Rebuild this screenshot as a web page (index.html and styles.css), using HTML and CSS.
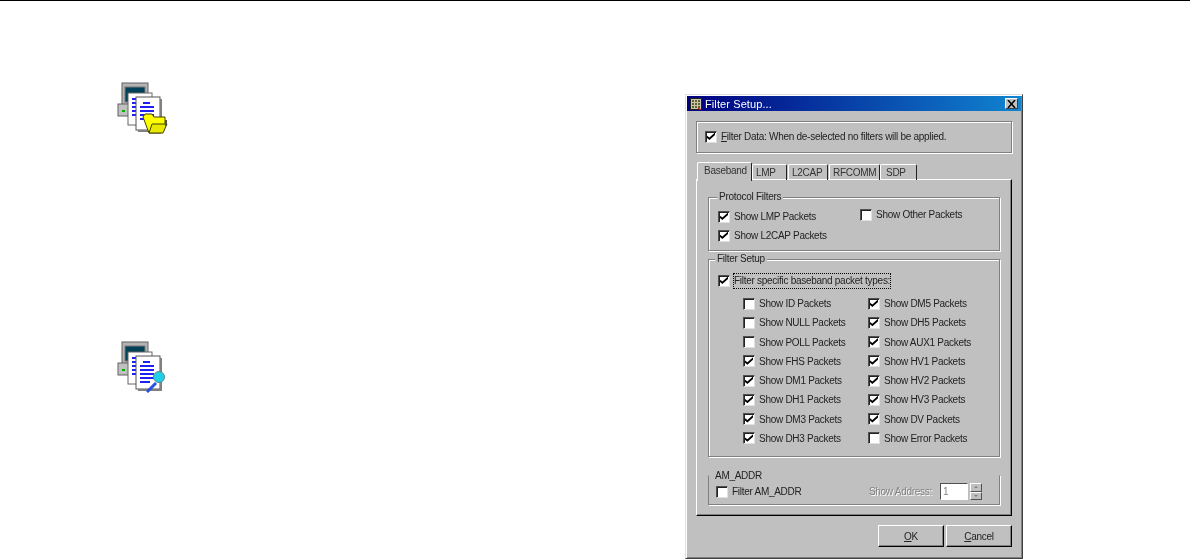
FILE: index.html
```html
<!DOCTYPE html>
<html lang="en">
<head>
    <meta charset="UTF-8">
    <title>Filter Setup</title>
    <link rel="stylesheet" href="styles.css">
</head>
<body>
    <div class="top-rule"></div>

    <div class="page">
        <div class="icons">
            <svg class="doc-icon" viewBox="0 0 52 52">
                <defs>
                    <g id="docStack">
                        <rect x="5" y="1" width="26" height="22" fill="#b4b4b4" stroke="#606060"/>
                        <rect x="8" y="5" width="20" height="15" fill="#004058" stroke="#787878"/>
                        <rect x="1" y="22" width="28" height="12" fill="#c0c0c0" stroke="#606060"/>
                        <rect x="5" y="28" width="3" height="2" fill="#00b000"/>
                        <rect x="11" y="11" width="24" height="32" fill="#fff" stroke="#666"/>
                        <path d="M15 17h4M15 21h4M15 25h4M15 29h4M15 33h4" stroke="#2020f0" stroke-width="2"/>
                        <rect x="19" y="15" width="24" height="33" fill="#fff" stroke="#555"/>
                        <path d="M44 17v32H21" fill="none" stroke="#808080" stroke-width="2"/>
                    </g>
                </defs>
                <use href="#docStack"/>
                <path d="M26 21h7M23 25h14M23 29h14M23 33h14M23 37h10" stroke="#2020f0" stroke-width="2"/>
                <path d="M26 35l2-3h7l2 3h11v10l-4 6H32z" fill="#ffff00" stroke="#404000"/>
                <path d="M32 51l3-9h15l-4 9z" fill="#e8e800" stroke="#404000"/>
                <path d="M49 38v6" stroke="#505050" stroke-width="2"/>
            </svg>
            <svg class="doc-icon" viewBox="0 0 52 52">
                <use href="#docStack"/>
                <path d="M26 21h7M23 25h14M23 29h14M23 33h14M23 37h14M23 41h10" stroke="#2020f0" stroke-width="2"/>
                <path d="M30 51l9-9" stroke="#2a50e0" stroke-width="3"/>
                <circle cx="42" cy="36" r="5.5" fill="#20d0e8" stroke="#5a8a90"/>
            </svg>
        </div>

        <div class="dialog">
            <div class="title-bar">
                <svg class="title-icon" viewBox="0 0 12 12">
                    <rect x="0.5" y="0.5" width="11" height="11" fill="#c8c8a8" stroke="#202020"/>
                    <path d="M2 3h8M2 6h8M2 9h8" stroke="#404010" stroke-width="1.4" stroke-dasharray="2 1"/>
                    <path d="M8 10l3 2" stroke="#c02020" stroke-width="1.2"/>
                </svg>
                <span class="title-text">Filter Setup...</span>
                <span class="close-btn">
                    <svg viewBox="0 0 9 8" width="9" height="8"><path d="M1 0l7 8M8 0L1 8" stroke="#000" stroke-width="1.5"/></svg>
                </span>
            </div>

            <div class="group filter-data">
                <label class="opt"><span class="box on"></span><span><u>F</u>ilter Data: When de-selected no filters will be applied.</span></label>
            </div>

            <div class="tabs">
                <div class="tab active">Baseband</div>
                <div class="tab tab-lmp">LMP</div>
                <div class="tab tab-l2cap">L2CAP</div>
                <div class="tab tab-rfcomm">RFCOMM</div>
                <div class="tab tab-sdp">SDP</div>
            </div>

            <div class="panel">
                <div class="group protocol">
                    <span class="legend">Protocol Filters</span>
                    <div class="protocol-grid">
                        <label class="opt"><span class="box on"></span>Show LMP Packets</label>
                        <label class="opt other"><span class="box"></span>Show Other Packets</label>
                        <label class="opt"><span class="box on"></span>Show L2CAP Packets</label>
                    </div>
                </div>

                <div class="group setup">
                    <span class="legend">Filter Setup</span>
                    <label class="opt specific"><span class="box on"></span><span class="focus">Filter specific baseband packet types:</span></label>
                    <div class="packet-grid">
                        <label class="opt"><span class="box"></span>Show ID Packets</label>
                        <label class="opt"><span class="box on"></span>Show DM5 Packets</label>
                        <label class="opt"><span class="box"></span>Show NULL Packets</label>
                        <label class="opt"><span class="box on"></span>Show DH5 Packets</label>
                        <label class="opt"><span class="box"></span>Show POLL Packets</label>
                        <label class="opt"><span class="box on"></span>Show AUX1 Packets</label>
                        <label class="opt"><span class="box on"></span>Show FHS Packets</label>
                        <label class="opt"><span class="box on"></span>Show HV1 Packets</label>
                        <label class="opt"><span class="box on"></span>Show DM1 Packets</label>
                        <label class="opt"><span class="box on"></span>Show HV2 Packets</label>
                        <label class="opt"><span class="box on"></span>Show DH1 Packets</label>
                        <label class="opt"><span class="box on"></span>Show HV3 Packets</label>
                        <label class="opt"><span class="box on"></span>Show DM3 Packets</label>
                        <label class="opt"><span class="box on"></span>Show DV Packets</label>
                        <label class="opt"><span class="box on"></span>Show DH3 Packets</label>
                        <label class="opt"><span class="box"></span>Show Error Packets</label>
                    </div>
                </div>

                <div class="group addr">
                    <span class="legend">AM_ADDR</span>
                    <label class="opt"><span class="box"></span>Filter AM_ADDR</label>
                    <div class="addr-right">
                        <span class="disabled">Show Address:</span>
                        <span class="addr-input">1</span>
                        <span class="spinner">
                            <span class="spin-btn"><span class="arrow-up"></span></span>
                            <span class="spin-btn"><span class="arrow-down"></span></span>
                        </span>
                    </div>
                </div>
            </div>

            <div class="buttons">
                <div class="btn"><span><u>O</u>K</span></div>
                <div class="btn"><span><u>C</u>ancel</span></div>
            </div>
        </div>
    </div>
</body>
</html>
```

FILE: styles.css
```css
body, html {
    margin: 0;
    padding: 0;
    background-color: #fff;
    height: 560px;
    overflow: hidden;
    font-family: "Liberation Sans", Arial, sans-serif;
    font-size: 10px;
    letter-spacing: -0.28px;
    color: #000;
}

.top-rule {
    height: 1px;
    background-color: #000;
}

.page {
    display: flex;
}

/* left column with the two document icons */
.icons {
    width: 568px;
    padding: 81px 0 0 117px;
    display: flex;
    flex-direction: column;
    gap: 207px;
}

.doc-icon {
    width: 52px;
    height: 52px;
    filter: blur(0.6px);
}

.dialog {
    margin-top: 93px;
    width: 338px;
    height: 465px;
    box-sizing: border-box;
    border: 1px solid;
    border-color: #dfdfdf #404040 #404040 #dfdfdf;
    box-shadow: inset 1px 1px #fff, inset -1px -1px #808080;
    background-color: #c0c0c0;
    padding: 1px;
    filter: blur(0.3px);
}

.title-bar {
    height: 15px;
    display: flex;
    align-items: center;
    padding: 0 3px;
    background: linear-gradient(90deg, #000080, #1084d0);
    color: #fff;
    font-size: 11px;
    letter-spacing: 0.1px;
}

.title-icon {
    width: 12px;
    height: 12px;
}

.title-text {
    margin-left: 3px;
    flex: 1;
}

.close-btn {
    width: 13px;
    height: 11px;
    box-sizing: border-box;
    background-color: #c0c0c0;
    border: 1px solid;
    border-color: #fff #404040 #404040 #fff;
    display: flex;
    align-items: center;
    justify-content: center;
}

.group {
    position: relative;
    box-sizing: border-box;
    border: 1px solid #808080;
    box-shadow: 1px 1px #fff, inset 1px 1px #fff;
}

.legend {
    position: absolute;
    top: -7px;
    left: 8px;
    padding: 0 2px;
    background-color: #c0c0c0;
    color: #222;
}

.opt {
    display: flex;
    align-items: center;
    height: 19px;
    color: #222;
}

.box {
    flex: none;
    width: 12px;
    height: 12px;
    box-sizing: border-box;
    margin-right: 4px;
    background-color: #fff;
    border: 1px solid;
    border-color: #505050 #dfdfdf #dfdfdf #505050;
    box-shadow: inset 1px 1px #222;
    position: relative;
}

.box.on::after {
    content: "";
    position: absolute;
    left: 1px;
    top: 1px;
    width: 8px;
    height: 8px;
    background-color: #000;
    clip-path: polygon(0 40%, 30% 62%, 100% 0, 100% 30%, 30% 95%, 0 70%);
}

.filter-data {
    margin: 10px 0 0 9px;
    width: 316px;
    height: 32px;
    padding: 5px 0 0 8px;
}

.tabs {
    margin: 9px 0 0 10px;
    height: 18px;
    display: flex;
    align-items: flex-end;
    position: relative;
    z-index: 1;
}

.tab {
    box-sizing: border-box;
    height: 16px;
    padding-left: 3px;
    line-height: 16px;
    border: 1px solid #808080;
    border-color: #fff #222 transparent #fff;
    border-bottom: 0;
    color: #333;
    border-radius: 2px 2px 0 0;
}

.tab.active {
    width: 55px;
    height: 19px;
    background-color: #c0c0c0;
    margin-bottom: -1px;
    padding-left: 6px;
}

.tab-lmp { width: 35px; }
.tab-l2cap { width: 40px; margin-left: 1px; }
.tab-rfcomm { width: 51px; margin-left: 1px; }
.tab-sdp { width: 37px; padding-left: 5px; }

.panel {
    margin: -1px 0 0 9px;
    width: 316px;
    height: 337px;
    box-sizing: border-box;
    border: 1px solid;
    border-color: #fff #000 #000 #fff;
    box-shadow: inset -1px -1px #808080;
    padding: 17px 0 0 11px;
}

.protocol {
    width: 292px;
    height: 54px;
    padding: 9px 0 0 9px;
}

.protocol-grid {
    display: grid;
    grid-template-columns: 142px 1fr;
}

.other {
    margin-top: -2px;
}

.setup {
    margin-top: 8px;
    width: 292px;
    height: 198px;
    padding: 12px 0 0 9px;
}

.setup .legend {
    left: 6px;
}

.specific {
    height: 17px;
}

.focus {
    padding: 1px 0;
    border: 1px dotted #000;
    line-height: 12px;
    margin-left: -1px;
}

.packet-grid {
    margin: 5px 0 0 25px;
    display: grid;
    grid-template-columns: 125px 1fr;
    grid-auto-rows: 19.25px;
}

.addr {
    margin-top: 18px;
    width: 292px;
    height: 30px;
    border-top-color: transparent;
    box-shadow: 1px 1px #fff;
    display: flex;
    padding: 7px 17px 0 7px;
    justify-content: space-between;
    align-items: flex-start;
}

.addr .legend {
    top: -6px;
    padding: 0;
    left: 6px;
    background: none;
}

.addr .opt {
    height: 17px;
}

.addr-right {
    display: flex;
    align-items: center;
}

.disabled {
    color: #808080;
    text-shadow: 1px 1px #fff;
    margin-right: 8px;
}

.addr-input {
    width: 28px;
    height: 17px;
    box-sizing: border-box;
    background-color: #fff;
    border: 1px solid;
    border-color: #505050 #fff #fff #505050;
    color: #808080;
    padding-left: 2px;
    line-height: 15px;
}

.spinner {
    margin-left: 2px;
    display: flex;
    flex-direction: column;
}

.spin-btn {
    width: 12px;
    height: 8.5px;
    box-sizing: border-box;
    border: 1px solid;
    border-color: #fff #505050 #505050 #fff;
    display: flex;
    align-items: center;
    justify-content: center;
}

.arrow-up {
    border: 2px solid transparent;
    border-top: 0;
    border-bottom-color: #808080;
}

.arrow-down {
    border: 2px solid transparent;
    border-bottom: 0;
    border-top-color: #808080;
}

.buttons {
    margin: 9px 0 0 191px;
    display: flex;
    gap: 2px;
}

.btn {
    width: 66px;
    height: 22px;
    box-sizing: border-box;
    border: 1px solid;
    border-color: #fff #000 #000 #fff;
    box-shadow: inset -1px -1px #808080;
    display: flex;
    align-items: center;
    justify-content: center;
    color: #222;
}
```
